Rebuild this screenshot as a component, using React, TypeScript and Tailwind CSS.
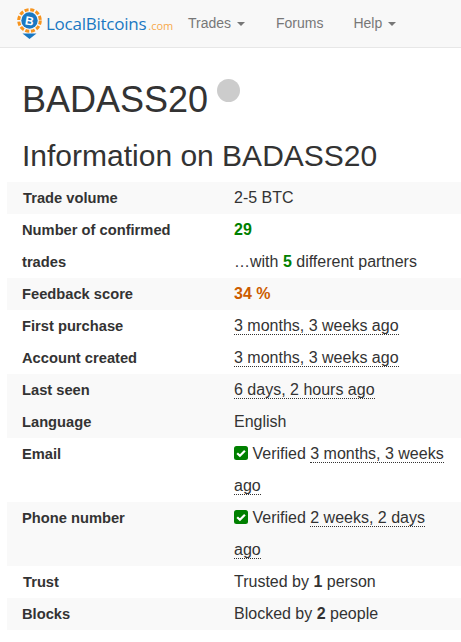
const rows = [
  { label: "Trade volume", value: <>2-5 BTC</>, shade: true, inset: true },
  {
    label: "Number of confirmed trades",
    value: (
      <>
        <b className="text-[#008000]">29</b>
        <br />…with <b className="text-[#008000]">5</b> different partners
      </>
    ),
    shade: false,
  },
  { label: "Feedback score", value: <b className="text-[#cc5c00]">34 %</b>, shade: true },
  { label: "First purchase", value: <Ago>3 months, 3 weeks ago</Ago>, shade: false },
  { label: "Account created", value: <Ago>3 months, 3 weeks ago</Ago>, shade: false },
  { label: "Last seen", value: <Ago>6 days, 2 hours ago</Ago>, shade: true },
  { label: "Language", value: <>English</>, shade: true },
  {
    label: "Email",
    value: (
      <>
        <Check /> Verified <Ago>3 months, 3 weeks ago</Ago>
      </>
    ),
    shade: false,
  },
  {
    label: "Phone number",
    value: (
      <>
        <Check /> Verified <Ago>2 weeks, 2 days ago</Ago>
      </>
    ),
    shade: true,
  },
  { label: "Trust", value: <>Trusted by <b>1</b> person</>, shade: false, inset: true },
  { label: "Blocks", value: <>Blocked by <b>2</b> people</>, shade: true },
];

function Ago({ children }: { children: React.ReactNode }) {
  return <span className="border-b border-dotted border-[#333]">{children}</span>;
}

function Check() {
  return (
    <svg viewBox="0 0 14 14" className="inline-block size-[14px] align-[-1px]">
      <rect width="14" height="14" rx="2.5" fill="#008000" />
      <path d="M3.2 7.2 5.9 9.8 10.9 4.8" fill="none" stroke="#fff" strokeWidth="2.2" />
    </svg>
  );
}

function Logo() {
  return (
    <svg viewBox="0 0 25 31" className="h-[31px] w-[25px] shrink-0">
      <circle cx="12.5" cy="12.5" r="10.8" fill="none" stroke="#f7941e" strokeWidth="3" strokeDasharray="4 1.7" />
      <circle cx="12.5" cy="12.5" r="8.2" fill="#1a78c2" />
      <path d="M5.5 25.5h14l-7 5.5z" fill="#1a78c2" />
      <text
        x="12.5"
        y="17"
        textAnchor="middle"
        fontSize="12"
        fontWeight="700"
        fill="#fff"
        fontFamily="Liberation Sans"
        transform="rotate(10 12.5 12.5)"
      >
        B
      </text>
    </svg>
  );
}

function Caret() {
  return <span className="ml-[2px] inline-block border-x-4 border-t-4 border-x-transparent border-t-[#777] align-middle" />;
}

export default function App() {
  return (
    <div className="min-h-[642px] overflow-hidden bg-white font-['Liberation_Sans',Arial,sans-serif] text-[#333]">
      <nav className="flex h-[48px] items-center border-b border-[#e7e7e7] bg-[#f8f8f8] text-[14px] text-[#777]">
        <div className="ml-[17px] flex w-[171px] items-center">
          <Logo />
          <span className="ml-[4px] font-['Open_Sans',sans-serif] text-[17px] tracking-[-0.25px] text-[#1a78c2]">
            LocalBitcoins
          </span>
          <span className="ml-[2px] mt-[5px] font-['Open_Sans',sans-serif] text-[11px] text-[#f7a84a]">.com</span>
        </div>
        <span className="mr-[31px]">Trades <Caret /></span>
        <span className="mr-[30px]">Forums</span>
        <span>Help <Caret /></span>
      </nav>
      <h1 className="mt-[27px] flex pl-[22px] text-[36px] leading-[50px]">
        BADASS20
        <span className="ml-[9px] mt-[4px] size-[23px] rounded-full bg-[#ccc]" />
      </h1>
      <h2 className="mt-[14px] pl-[22px] text-[30px] leading-[33px]">Information on BADASS20</h2>
      <div className="ml-[7px] mt-[10px] text-[16px] leading-[32px]">
        {rows.map((r) => (
          <div key={r.label} className={`flex ${r.shade ? "bg-[#f9f9f9]" : "bg-white"}`}>
            <div className={`w-[227px] shrink-0 text-[14.7px] font-bold ${r.inset ? "pl-[16px] pr-[60px]" : "pl-[15px] pr-[40px]"}`}>
              {r.label}
            </div>
            <div className="min-w-0 flex-1 pr-[12px]">{r.value}</div>
          </div>
        ))}
      </div>
    </div>
  );
}
